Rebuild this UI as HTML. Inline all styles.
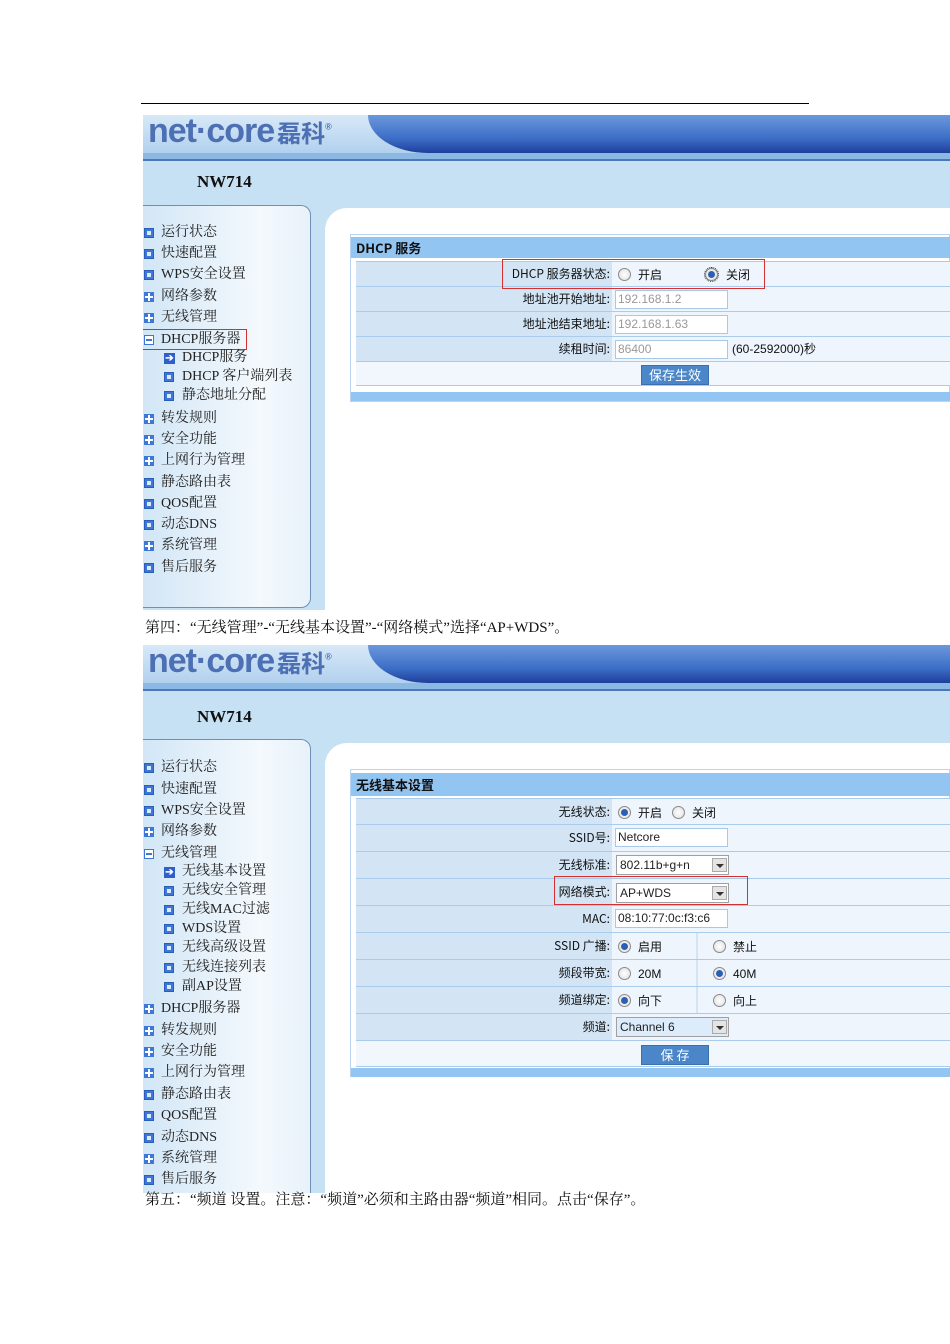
<!DOCTYPE html>
<html><head><meta charset="utf-8"><style>
*{margin:0;padding:0;box-sizing:border-box}
body{width:950px;height:1344px;background:#fff;position:relative;overflow:hidden;font-family:"Liberation Sans","Noto Sans CJK SC",sans-serif}
.a{position:absolute}
.shot{position:absolute;left:143px;width:807px;overflow:hidden;background:#c6e0f4}
.hdr{position:absolute;left:0;top:0;width:807px;height:46px;background:linear-gradient(#d8e9f7,#aacbec)}
.band{position:absolute;left:225px;top:0;width:600px;height:38px;background:linear-gradient(#6a98dc,#3e6fc8 60%,#1d3f9c);border-bottom-left-radius:60px 38px}
.band2{position:absolute;left:0;top:38px;width:807px;height:8px;background:#8cb8e4;border-bottom:2px solid #4a78b8}
.logo{position:absolute;left:5px;top:-3px;font:bold 34px "Liberation Sans",sans-serif;color:#4d6fb3;letter-spacing:-1px}
.logo b{font:bold 24px "Noto Sans CJK SC",sans-serif;color:#4d6fb3;letter-spacing:0;margin-left:3px}
.nw{position:absolute;left:54px;font:bold 17px "Liberation Serif",serif;color:#111}
.side{position:absolute;left:0;width:168px;background:linear-gradient(90deg,#d2e6f6,#f4f9fd 70%,#e8f2fa);border:1px solid #6d8fb8;border-left:none;border-top-right-radius:10px;border-bottom-right-radius:10px}
.main{position:absolute;left:182px;width:640px;background:#fff;border-top-left-radius:22px}
.wrap{position:absolute;left:0;top:3px;width:200px;height:600px}
.it{position:absolute;font:14px "Liberation Serif","Noto Serif CJK SC",serif;color:#222;white-space:nowrap;line-height:18px}
.ic{position:absolute;width:10px;height:10px;background:#3e78d6;border:1px solid #2a5db8}
.ic:after{content:"";position:absolute;left:2px;top:2px;width:4px;height:4px;background:#dde9fb}
.pl{position:absolute;width:10px;height:10px;background:#3e78d6}
.pl:before{content:"";position:absolute;left:1px;top:4px;width:8px;height:2px;background:#fff}
.pl:after{content:"";position:absolute;left:4px;top:1px;width:2px;height:8px;background:#fff}
.mi{position:absolute;width:10px;height:10px;background:#fff;border:1px solid #3e78d6}
.mi:after{content:"";position:absolute;left:1px;top:3px;width:6px;height:2px;background:#3e78d6}
.ar{position:absolute;width:11px;height:11px;background:#2f5fc8;color:#fff;font:bold 10px/11px sans-serif;text-align:center}
.tbl{position:absolute;left:207px;width:600px;background:#fff;border:1px solid #b8d4ee}
.th{position:absolute;left:0;width:600px;background:#93c5f2;font:bold 13px "Noto Sans CJK SC",sans-serif;padding-left:5px;color:#111}
.rw{position:absolute;left:5px;width:595px;background:#eef5fd;border-top:1px solid #a9cbec}
.lb{position:absolute;left:0;top:0;bottom:0;width:256px;background:#d3e5f5;text-align:right;font:12px "Noto Sans CJK SC",sans-serif;color:#111;padding-right:2px}
.vl{position:absolute;left:259px;top:0;font:12px "Liberation Sans","Noto Sans CJK SC",sans-serif;color:#111}
.inp{position:absolute;height:19px;border:1px solid #a8c8e8;background:#fff;font:12px "Liberation Sans",sans-serif;color:#999;padding-left:2px;line-height:17px}
.rd{position:absolute;width:13px;height:13px;border-radius:50%;border:1px solid #8a8a8a;background:radial-gradient(#fff,#ddd)}
.rd.on:after{content:"";position:absolute;left:2px;top:2px;width:7px;height:7px;border-radius:50%;background:#2c5fb4}
.btn{position:absolute;background:#4b86c8;color:#fff;font:13px "Noto Sans CJK SC",sans-serif;text-align:center;border:1px solid #3a6fb0}
.bar{position:absolute;left:0;width:600px;height:9px;background:#93c5f2}
.sel{position:absolute;height:20px;border:1px solid #a0a0a0;background:#fff;font:12px "Liberation Sans",sans-serif;color:#222;padding-left:3px;line-height:18px}
.sel i{position:absolute;right:1px;top:2px;width:15px;height:14px;background:#e4e4e4;border:1px solid #aaa}
.sel i:after{content:"";position:absolute;left:3px;top:5px;border:4px solid transparent;border-top:4px solid #333}
.red{position:absolute;border:1.5px solid #d43030}
.cap{position:absolute;left:145px;font:15px "Liberation Serif","Noto Serif CJK SC",serif;color:#111;white-space:nowrap}
</style></head><body>
<div class="a" style="left:141px;top:103px;width:668px;height:1px;background:#000"></div>

<!-- SHOT 1 -->
<div class="shot" style="top:115px;height:495px">
 <div class="hdr"></div><div class="band2"></div><div class="band"></div>
 <div class="logo">net·core<b>磊科</b><sup style="font-size:9px">®</sup></div>
 <div class="nw" style="top:57px">NW714</div>
 <div class="main" style="top:93px;height:410px"></div>
 <div class="side" style="top:90px;height:403px"></div>
 <div class="wrap">
 <div class="ic" style="left:1px;top:110px"></div><div class="it" style="left:18px;top:106px">运行状态</div>
 <div class="ic" style="left:1px;top:131px"></div><div class="it" style="left:18px;top:127px">快速配置</div>
 <div class="ic" style="left:1px;top:152px"></div><div class="it" style="left:18px;top:148px">WPS安全设置</div>
 <div class="pl" style="left:1px;top:174px"></div><div class="it" style="left:18px;top:170px">网络参数</div>
 <div class="pl" style="left:1px;top:195px"></div><div class="it" style="left:18px;top:191px">无线管理</div>
 <div class="mi" style="left:1px;top:217px"></div><div class="it" style="left:18px;top:213px">DHCP服务器</div>
 <div class="red" style="left:-3px;top:211px;width:107px;height:21px"></div>
 <div class="ar" style="left:21px;top:235px">➔</div><div class="it" style="left:39px;top:231px">DHCP服务</div>
 <div class="ic" style="left:21px;top:254px"></div><div class="it" style="left:39px;top:250px">DHCP 客户端列表</div>
 <div class="ic" style="left:21px;top:273px"></div><div class="it" style="left:39px;top:269px">静态地址分配</div>
 <div class="pl" style="left:1px;top:296px"></div><div class="it" style="left:18px;top:292px">转发规则</div>
 <div class="pl" style="left:1px;top:317px"></div><div class="it" style="left:18px;top:313px">安全功能</div>
 <div class="pl" style="left:1px;top:338px"></div><div class="it" style="left:18px;top:334px">上网行为管理</div>
 <div class="ic" style="left:1px;top:360px"></div><div class="it" style="left:18px;top:356px">静态路由表</div>
 <div class="ic" style="left:1px;top:381px"></div><div class="it" style="left:18px;top:377px">QOS配置</div>
 <div class="ic" style="left:1px;top:402px"></div><div class="it" style="left:18px;top:398px">动态DNS</div>
 <div class="pl" style="left:1px;top:423px"></div><div class="it" style="left:18px;top:419px">系统管理</div>
 <div class="ic" style="left:1px;top:445px"></div><div class="it" style="left:18px;top:441px">售后服务</div>
 </div>

 <div class="tbl" style="top:119px;height:168px">
  <div class="th" style="top:2px;height:21px;line-height:21px">DHCP 服务</div>
  <div class="rw" style="top:26px;height:25px"><div class="lb" style="line-height:24px">DHCP 服务器状态:</div>
   <div class="rd" style="left:262px;top:6px"></div><div class="vl" style="left:282px;line-height:26px">开启</div>
   <div class="rd on" style="left:349px;top:6px;outline:1px dotted #333"></div><div class="vl" style="left:370px;line-height:26px">关闭</div></div>
  <div class="rw" style="top:51px;height:25px"><div class="lb" style="line-height:24px">地址池开始地址:</div><div class="inp" style="left:259px;top:3px;width:113px">192.168.1.2</div></div>
  <div class="rw" style="top:76px;height:25px"><div class="lb" style="line-height:24px">地址池结束地址:</div><div class="inp" style="left:259px;top:3px;width:113px">192.168.1.63</div></div>
  <div class="rw" style="top:101px;height:25px"><div class="lb" style="line-height:24px">续租时间:</div><div class="inp" style="left:259px;top:3px;width:113px">86400</div><div class="vl" style="left:376px;line-height:25px">(60-2592000)秒</div></div>
  <div class="rw" style="top:126px;height:25px;background:#f2f7fd;border-bottom:1px solid #a9cbec"><div class="btn" style="left:285px;top:3px;width:68px;height:20px;line-height:18px">保存生效</div></div>
  <div class="bar" style="top:157px"></div>
 </div>
 <div class="red" style="left:359px;top:144px;width:263px;height:30px"></div>
</div>
<div class="cap" style="top:616px">第四：“无线管理”-“无线基本设置”-“网络模式”选择“AP+WDS”。</div>

<!-- SHOT 2 -->
<div class="shot" style="top:645px;height:548px">
 <div class="hdr"></div><div class="band2"></div><div class="band"></div>
 <div class="logo">net·core<b>磊科</b><sup style="font-size:9px">®</sup></div>
 <div class="nw" style="top:62px">NW714</div>
 <div class="main" style="top:98px;height:460px"></div>
 <div class="side" style="top:94px;height:470px"></div>
 <div class="wrap">
 <div class="ic" style="left:1px;top:115px"></div><div class="it" style="left:18px;top:111px">运行状态</div>
 <div class="ic" style="left:1px;top:137px"></div><div class="it" style="left:18px;top:133px">快速配置</div>
 <div class="ic" style="left:1px;top:158px"></div><div class="it" style="left:18px;top:154px">WPS安全设置</div>
 <div class="pl" style="left:1px;top:179px"></div><div class="it" style="left:18px;top:175px">网络参数</div>
 <div class="mi" style="left:1px;top:201px"></div><div class="it" style="left:18px;top:197px">无线管理</div>
 <div class="ar" style="left:21px;top:219px">➔</div><div class="it" style="left:39px;top:215px">无线基本设置</div>
 <div class="ic" style="left:21px;top:238px"></div><div class="it" style="left:39px;top:234px">无线安全管理</div>
 <div class="ic" style="left:21px;top:257px"></div><div class="it" style="left:39px;top:253px">无线MAC过滤</div>
 <div class="ic" style="left:21px;top:276px"></div><div class="it" style="left:39px;top:272px">WDS设置</div>
 <div class="ic" style="left:21px;top:295px"></div><div class="it" style="left:39px;top:291px">无线高级设置</div>
 <div class="ic" style="left:21px;top:315px"></div><div class="it" style="left:39px;top:311px">无线连接列表</div>
 <div class="ic" style="left:21px;top:334px"></div><div class="it" style="left:39px;top:330px">副AP设置</div>
 <div class="pl" style="left:1px;top:356px"></div><div class="it" style="left:18px;top:352px">DHCP服务器</div>
 <div class="pl" style="left:1px;top:378px"></div><div class="it" style="left:18px;top:374px">转发规则</div>
 <div class="pl" style="left:1px;top:399px"></div><div class="it" style="left:18px;top:395px">安全功能</div>
 <div class="pl" style="left:1px;top:420px"></div><div class="it" style="left:18px;top:416px">上网行为管理</div>
 <div class="ic" style="left:1px;top:442px"></div><div class="it" style="left:18px;top:438px">静态路由表</div>
 <div class="ic" style="left:1px;top:463px"></div><div class="it" style="left:18px;top:459px">QOS配置</div>
 <div class="ic" style="left:1px;top:485px"></div><div class="it" style="left:18px;top:481px">动态DNS</div>
 <div class="pl" style="left:1px;top:506px"></div><div class="it" style="left:18px;top:502px">系统管理</div>
 <div class="ic" style="left:1px;top:527px"></div><div class="it" style="left:18px;top:523px">售后服务</div>
 </div>

 <div class="tbl" style="top:124px;height:308px">
  <div class="th" style="top:3px;height:23px;line-height:23px">无线基本设置</div>
  <div class="rw" style="top:28px;height:26px"><div class="lb" style="line-height:26px">无线状态:</div>
   <div class="rd on" style="left:262px;top:7px"></div><div class="vl" style="left:282px;line-height:28px">开启</div>
   <div class="rd" style="left:316px;top:7px"></div><div class="vl" style="left:336px;line-height:28px">关闭</div></div>
  <div class="rw" style="top:54px;height:27px"><div class="lb" style="line-height:26px">SSID号:</div><div class="inp" style="left:259px;top:3px;width:113px;color:#222">Netcore</div></div>
  <div class="rw" style="top:81px;height:27px"><div class="lb" style="line-height:26px">无线标准:</div><div class="sel" style="left:260px;top:3px;width:113px">802.11b+g+n<i></i></div></div>
  <div class="rw" style="top:108px;height:27px"><div class="lb" style="line-height:26px">网络模式:</div><div class="sel" style="left:260px;top:4px;width:113px">AP+WDS<i></i></div></div>
  <div class="rw" style="top:135px;height:27px"><div class="lb" style="line-height:26px">MAC:</div><div class="inp" style="left:259px;top:3px;width:113px;color:#222">08:10:77:0c:f3:c6</div></div>
  <div class="rw" style="top:162px;height:27px"><div class="lb" style="line-height:26px">SSID 广播:</div>
   <div class="rd on" style="left:262px;top:7px"></div><div class="vl" style="left:282px;line-height:28px">启用</div>
   <div class="a" style="left:340px;top:0;width:2px;height:26px;background:#d3e5f5"></div>
   <div class="rd" style="left:357px;top:7px"></div><div class="vl" style="left:377px;line-height:28px">禁止</div></div>
  <div class="rw" style="top:189px;height:27px"><div class="lb" style="line-height:26px">频段带宽:</div>
   <div class="rd" style="left:262px;top:7px"></div><div class="vl" style="left:282px;line-height:28px">20M</div>
   <div class="a" style="left:340px;top:0;width:2px;height:26px;background:#d3e5f5"></div>
   <div class="rd on" style="left:357px;top:7px"></div><div class="vl" style="left:377px;line-height:28px">40M</div></div>
  <div class="rw" style="top:216px;height:27px"><div class="lb" style="line-height:26px">频道绑定:</div>
   <div class="rd on" style="left:262px;top:7px"></div><div class="vl" style="left:282px;line-height:28px">向下</div>
   <div class="a" style="left:340px;top:0;width:2px;height:26px;background:#d3e5f5"></div>
   <div class="rd" style="left:357px;top:7px"></div><div class="vl" style="left:377px;line-height:28px">向上</div></div>
  <div class="rw" style="top:243px;height:27px"><div class="lb" style="line-height:26px">频道:</div><div class="sel" style="left:260px;top:3px;width:113px;background:#dcecfb">Channel 6<i></i></div></div>
  <div class="rw" style="top:270px;height:27px;background:#f2f7fd;border-bottom:1px solid #a9cbec"><div class="btn" style="left:285px;top:4px;width:68px;height:20px;line-height:18px">保 存</div></div>
  <div class="bar" style="top:298px"></div>
 </div>
 <div class="red" style="left:411px;top:231px;width:194px;height:29px"></div>
</div>
<div class="cap" style="top:1188px">第五：“频道 设置。注意：“频道”必须和主路由器“频道”相同。点击“保存”。</div>
</body></html>
